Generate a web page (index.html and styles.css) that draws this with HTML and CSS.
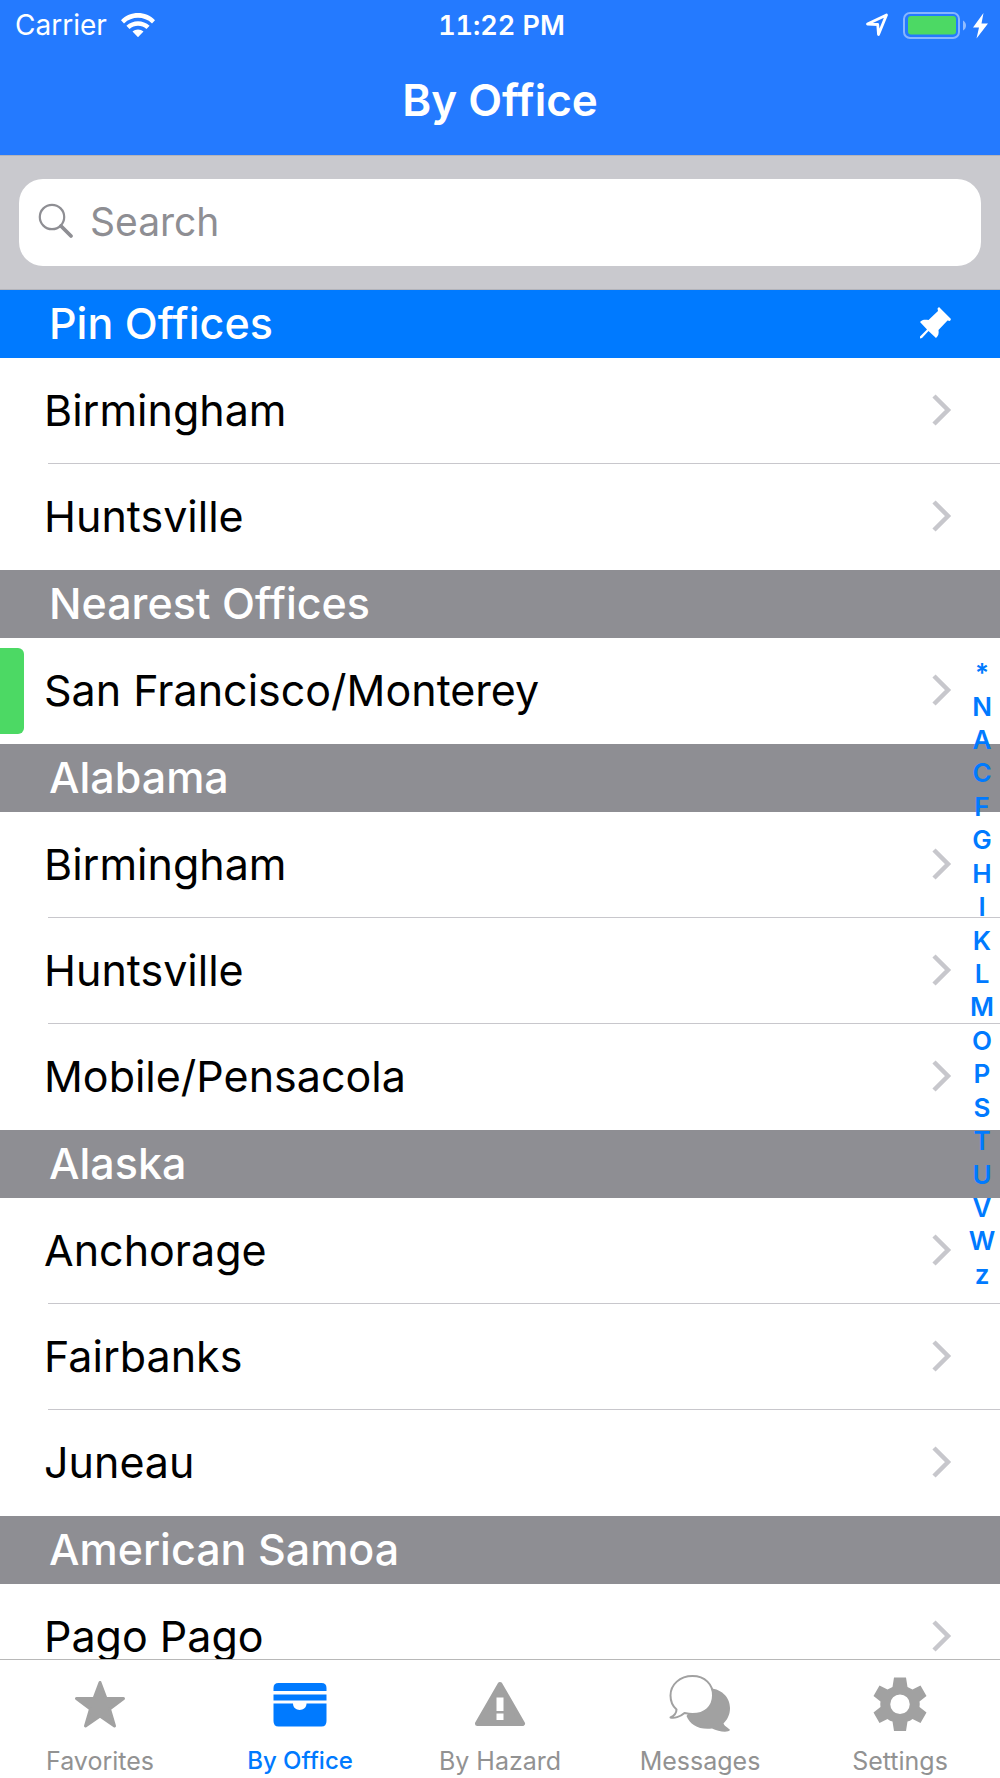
FILE: index.html
```html
<!DOCTYPE html>
<html lang="en">
<head>
<meta charset="utf-8">
<meta name="viewport" content="width=device-width, initial-scale=1">
<title>By Office</title>
<link rel="stylesheet" href="styles.css">
</head>
<body>
<svg width="0" height="0" class="defs" aria-hidden="true">
  <symbol id="chevron" viewBox="0 0 20 32"><path d="M2 2 16 16 2 30" fill="none" stroke="#c7c7cc" stroke-width="4.500"/></symbol>
</svg>
<div class="app">
  <header class="top">
    <div class="status">
      <div class="status-left">
        <span>Carrier</span>
        <svg width="34" height="24" viewBox="0 0 34 24" aria-label="Wi-Fi"><path d="M0 7.200C9 -2.400 25 -2.400 34 7.200L31 10.400C23 3 11 3 3 10.400ZM5.400 12.800C12 6.600 22 6.600 28.600 12.800L25.500 16C20.500 11.600 13.500 11.600 8.500 16ZM11.500 18.600C14.500 15.800 19.500 15.800 22.500 18.600L17 24.200Z" fill="#fff"/></svg>
      </div>
      <time>11:22 PM</time>
      <div class="status-right">
        <svg width="24" height="24" viewBox="0 0 24 24" aria-label="Location"><path d="M2.500 11 21.500 2 13.500 21.500 12.700 11.500Z" fill="none" stroke="#fff" stroke-width="2.800" stroke-linejoin="round"/></svg>
        <svg width="88" height="28" viewBox="0 0 88 28" aria-label="Battery charging"><rect x="4" y="2" width="55" height="25" rx="6" fill="none" stroke="#fff" stroke-opacity=".45" stroke-width="2"/><rect x="8" y="5" width="48" height="18.500" rx="3" fill="#4cd964"/><path d="M63 9.500C67 11.500 67 17.500 63 19.500Z" fill="#fff" fill-opacity=".5"/><path d="M83.500 2 73 16.500H79L76.500 27.500 88 12.500H81.500Z" fill="#fff"/></svg>
      </div>
    </div>
    <h1>By Office</h1>
  </header>
  <form class="search">
    <label class="search-field">
      <svg width="36" height="36" viewBox="0 0 36 36" aria-hidden="true"><g fill="none" stroke="#8e8e93"><circle cx="14" cy="14" r="12.200" stroke-width="2.200"/><path d="M23 23 33 33" stroke-width="3.800" stroke-linecap="round"/></g></svg>
      <input type="text" placeholder="Search" aria-label="Search">
    </label>
  </form>
  <div class="content">
    <main class="list">
      <section>
        <h2 class="pinned">Pin Offices
          <svg width="32" height="32" viewBox="0 0 32 32" aria-hidden="true"><path d="M20 0 32 12 31 14 28.500 13.500 19.500 23C20 26 19.500 29 17 31L9.500 24 3 31 1 31.500 1 29.500 8 22.500 1 15C3 12.500 6 12.500 9.500 13L19 4 18.500 1.500Z" fill="#fff"/></svg>
        </h2>
        <ul>
          <li><a href="#">Birmingham<svg><use href="#chevron"/></svg></a></li>
          <li><a href="#">Huntsville<svg><use href="#chevron"/></svg></a></li>
        </ul>
      </section>
      <section>
        <h2>Nearest Offices</h2>
        <ul>
          <li class="near"><a href="#">San Francisco/Monterey<svg><use href="#chevron"/></svg></a></li>
        </ul>
      </section>
      <section>
        <h2>Alabama</h2>
        <ul>
          <li><a href="#">Birmingham<svg><use href="#chevron"/></svg></a></li>
          <li><a href="#">Huntsville<svg><use href="#chevron"/></svg></a></li>
          <li><a href="#">Mobile/Pensacola<svg><use href="#chevron"/></svg></a></li>
        </ul>
      </section>
      <section>
        <h2>Alaska</h2>
        <ul>
          <li><a href="#">Anchorage<svg><use href="#chevron"/></svg></a></li>
          <li><a href="#">Fairbanks<svg><use href="#chevron"/></svg></a></li>
          <li><a href="#">Juneau<svg><use href="#chevron"/></svg></a></li>
        </ul>
      </section>
      <section>
        <h2>American Samoa</h2>
        <ul>
          <li><a href="#">Pago Pago<svg><use href="#chevron"/></svg></a></li>
        </ul>
      </section>
    </main>
    <nav class="index" aria-label="Section index">
      <a href="#">*</a><a href="#">N</a><a href="#">A</a><a href="#">C</a><a href="#">F</a><a href="#">G</a><a href="#">H</a><a href="#">I</a><a href="#">K</a><a href="#">L</a><a href="#">M</a><a href="#">O</a><a href="#">P</a><a href="#">S</a><a href="#">T</a><a href="#">U</a><a href="#">V</a><a href="#">W</a><a href="#">z</a>
    </nav>
  </div>
  <nav class="tabs" aria-label="Main">
    <a href="#"><svg viewBox="0 0 64 60"><path d="M32 8.500 38 24.500H55.500L41.500 35 46.500 52 32 42 17.500 52 22.500 35 8.500 24.500H26Z" fill="#a1a1a1" stroke="#a1a1a1" stroke-width="3" stroke-linejoin="round"/></svg>Favorites</a>
    <a href="#" class="active" aria-current="page"><svg viewBox="0 0 64 60"><path d="M5.500 17V14Q5.500 9 10.500 9H53.500Q58.500 9 58.500 14V17ZM5.500 20.500H58.500V26.500H5.500ZM5.500 29.500H25C25 38 38.500 38 38.500 29.500H58.500V47Q58.500 52.500 53.500 52.500H10.500Q5.500 52.500 5.500 47Z" fill="#007aff"/></svg>By Office</a>
    <a href="#"><svg viewBox="0 0 64 60"><path d="M32 10.500 54.500 49.500H9.500Z" fill="#a1a1a1" stroke="#a1a1a1" stroke-width="5" stroke-linejoin="round"/><path d="M28.500 23.500H35.500V37H28.500ZM28.500 39.500H35.500V46H28.500Z" fill="#fff"/></svg>By Hazard</a>
    <a href="#"><svg viewBox="0 0 64 60"><path d="M39 14C53 14 62 23 62 34C62 41 59 46 55.500 49.500C57 53 61 54 62 56C60 59 50 57.500 44 54.500C31 56 22 51 18.500 42Z" fill="#a1a1a1"/><path d="M24.500 2C37 2 45 10.500 45 21.500S37 40 24.500 40C22 40 19 39.500 16.500 39C12 43 6 44.500 2.500 43.500C6.500 41.500 8.500 38.500 8.500 35.500C4.500 32 2.500 27 2.500 21.500C2.500 10.500 12 2 24.500 2Z" fill="#fff" stroke="#a1a1a1" stroke-width="2" stroke-linejoin="round"/></svg>Messages</a>
    <a href="#"><svg viewBox="0 0 64 60"><path fill-rule="evenodd" d="M26 3.500H38L39.500 13Q42 14 44.500 15.500L52.500 11.500 58.500 22 51.500 27.500Q52 30 51.500 33L58.500 38.500 52.500 49 44.500 45Q42 47 39.500 47.500L38 57H26L24.500 47.500Q22 47 19.500 45L11.500 49 5.500 38.500 12.500 33Q12 30 12.500 27.500L5.500 22 11.500 11.500 19.500 15.500Q22 14 24.500 13ZM32 20.500A9.700 9.700 0 1 0 32 40A9.700 9.700 0 1 0 32 20.500Z" fill="#a1a1a1"/></svg>Settings</a>
  </nav>
</div>
</body>
</html>
```

FILE: styles.css
```css
* { box-sizing: border-box; }

body {
  margin: 0;
  font-family: Inter, "Liberation Sans", sans-serif;
  font-optical-sizing: none;
  font-variant-ligatures: none;
  background: #fff;
  color: #000;
}

a { color: inherit; text-decoration: none; }
h1, h2, ul { margin: 0; padding: 0; }
ul { list-style: none; }

.defs { position: absolute; }

.app {
  display: flex;
  flex-direction: column;
  height: 100vh;
}

/* Status bar and title */
.top {
  background: #247aff;
  color: #fff;
  text-align: center;
}

.status {
  display: grid;
  grid-template-columns: 1fr auto 1fr;
  align-items: center;
  height: 50px;
  padding: 0 12px 0 15px;
  font-size: 28px;
}

.status time {
  font-size: 27px;
  font-weight: 600;
  font-variant-numeric: tabular-nums;
}

.status-left { display: flex; align-items: center; gap: 14px; }
.status-right { display: flex; align-items: center; justify-content: flex-end; gap: 11px; }

h1 {
  height: 105px;
  font-size: 44px;
  font-weight: 600;
  line-height: 100px;
}

/* Search */
.search {
  padding: 23px 19px;
  background: #c9c9ce;
  border-top: 1px solid #b4b4ba;
  border-bottom: 1px solid #b4b4ba;
}

.search-field {
  display: flex;
  align-items: center;
  gap: 16px;
  height: 87px;
  padding: 0 19px 3px;
  border-radius: 24px;
  background: #fff;
}

.search-field input {
  flex: 1;
  min-width: 0;
  padding: 0;
  border: 0;
  outline: 0;
  background: none;
  font: inherit;
  font-size: 39px;
}

.search-field input::placeholder { color: #8e8e93; opacity: 1; }

/* Office list */
.content {
  position: relative;
  flex: 1;
  min-height: 0;
}

.list {
  height: 100%;
  overflow-y: auto;
  scrollbar-width: none;
}

h2 {
  display: flex;
  align-items: center;
  justify-content: space-between;
  height: 68px;
  padding: 0 49px 2px;
  background: #8e8e93;
  color: #fff;
  font-size: 43px;
  font-weight: 500;
}

.pinned { background: #007aff; }

li { padding-left: 48px; }

li a {
  display: flex;
  align-items: center;
  justify-content: space-between;
  height: 106px;
  margin-left: -4px;
  padding: 0 48px 3px 0;
  font-size: 43px;
}

li svg { width: 20px; height: 32px; }

li:not(:last-child) {
  background: linear-gradient(#c8c7cc, #c8c7cc) 48px 100% / 100% 1px no-repeat;
}

.near {
  display: flex;
  align-items: center;
  padding-left: 0;
}

.near::before {
  content: "";
  width: 24px;
  height: 86px;
  border-radius: 0 6px 6px 0;
  background: #4cd964;
}

.near a { flex: 1; margin-left: 20px; }

/* Alphabet index lies over the right edge of the list */
.index {
  position: absolute;
  top: 50%;
  right: 0;
  display: grid;
  grid-auto-rows: 1fr;
  align-items: center;
  justify-items: center;
  width: 36px;
  height: 635px;
  margin-top: -318px;
  color: #007aff;
  font-size: 26px;
  font-weight: 600;
  line-height: 32px;
}

/* Tab bar */
.tabs {
  display: grid;
  grid-template-columns: repeat(5, 1fr);
  height: 119px;
  border-top: 1px solid #b8b8b8;
  background: #fff;
  color: #929292;
  font-size: 25px;
}

.tabs a {
  display: flex;
  flex-direction: column;
  align-items: center;
  gap: 12px;
  padding-top: 14px;
  line-height: 30px;
}

.tabs svg { width: 64px; height: 60px; }

.tabs .active {
  color: #007aff;
  font-size: 24px;
  font-weight: 500;
}
```
